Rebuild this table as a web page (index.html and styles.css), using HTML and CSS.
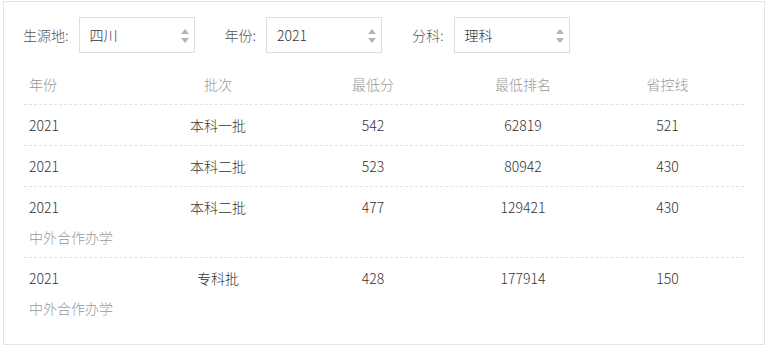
FILE: index.html
```html
<!DOCTYPE html>
<html lang="zh">
<head>
<meta charset="utf-8">
<link rel="stylesheet" href="styles.css">
</head>
<body>
<div class="panel">
  <div class="filters">
    <span class="label">生源地:</span>
    <div class="select"><span class="val">四川</span><span class="arrows"><i class="up"></i><i class="down"></i></span></div>
    <span class="label">年份:</span>
    <div class="select"><span class="val">2021</span><span class="arrows"><i class="up"></i><i class="down"></i></span></div>
    <span class="label">分科:</span>
    <div class="select"><span class="val">理科</span><span class="arrows"><i class="up"></i><i class="down"></i></span></div>
  </div>
  <div class="table">
    <div class="row head">
      <div class="c c1">年份</div><div class="c">批次</div><div class="c">最低分</div><div class="c">最低排名</div><div class="c">省控线</div>
    </div>
    <div class="row">
      <div class="c c1">2021</div><div class="c">本科一批</div><div class="c">542</div><div class="c">62819</div><div class="c">521</div>
    </div>
    <div class="row">
      <div class="c c1">2021</div><div class="c">本科二批</div><div class="c">523</div><div class="c">80942</div><div class="c">430</div>
    </div>
    <div class="row">
      <div class="c c1">2021</div><div class="c">本科二批</div><div class="c">477</div><div class="c">129421</div><div class="c">430</div>
      <div class="sub">中外合作办学</div>
    </div>
    <div class="row last">
      <div class="c c1">2021</div><div class="c">专科批</div><div class="c">428</div><div class="c">177914</div><div class="c">150</div>
      <div class="sub">中外合作办学</div>
    </div>
  </div>
</div>
</body>
</html>
```
FILE: styles.css
```css
html, body {
  margin: 0;
  padding: 0;
  background: #fff;
}
body {
  font-family: "Noto Sans CJK SC", "Microsoft YaHei", sans-serif;
  font-size: 14px;
  font-weight: 300;
  color: #333;
}
.panel {
  margin: 1px 0 0 3px;
  width: 760px;
  height: 342px;
  border: 1px solid #e3e3e3;
}
.filters {
  display: flex;
  align-items: center;
  padding: 15px 0 0 19px;
}
.label {
  color: #555;
  margin-right: 10px;
}
.select {
  position: relative;
  box-sizing: border-box;
  width: 116px;
  height: 36px;
  border: 1px solid #dedede;
  margin-right: 30px;
  display: flex;
  align-items: center;
  padding-left: 10px;
  color: #333;
}
.arrows {
  position: absolute;
  right: 5px;
  top: 10px;
  width: 9px;
  height: 16px;
}
.arrows i {
  position: absolute;
  left: 1px;
  width: 0;
  height: 0;
  border-left: 4px solid transparent;
  border-right: 4px solid transparent;
}
.arrows .up {
  top: 1px;
  border-bottom: 5px solid #b5b5b5;
}
.arrows .down {
  top: 10px;
  border-top: 5px solid #b5b5b5;
}
.table {
  margin: 10px 0 0 20px;
  width: 720px;
}
.row {
  display: grid;
  grid-template-columns: 121px 146px 164px 136px 153px;
  border-bottom: 1px dashed #e2e2e2;
}
.row.last {
  border-bottom: none;
}
.c {
  line-height: 40px;
  text-align: center;
}
.c.c1 {
  text-align: left;
  padding-left: 5px;
}
.head {
  height: 41px;
}
.head .c {
  color: #999;
  line-height: 42px;
}
.sub {
  grid-column: 1 / -1;
  color: #999;
  padding-left: 5px;
  line-height: 20px;
  padding-bottom: 10px;
}
```
